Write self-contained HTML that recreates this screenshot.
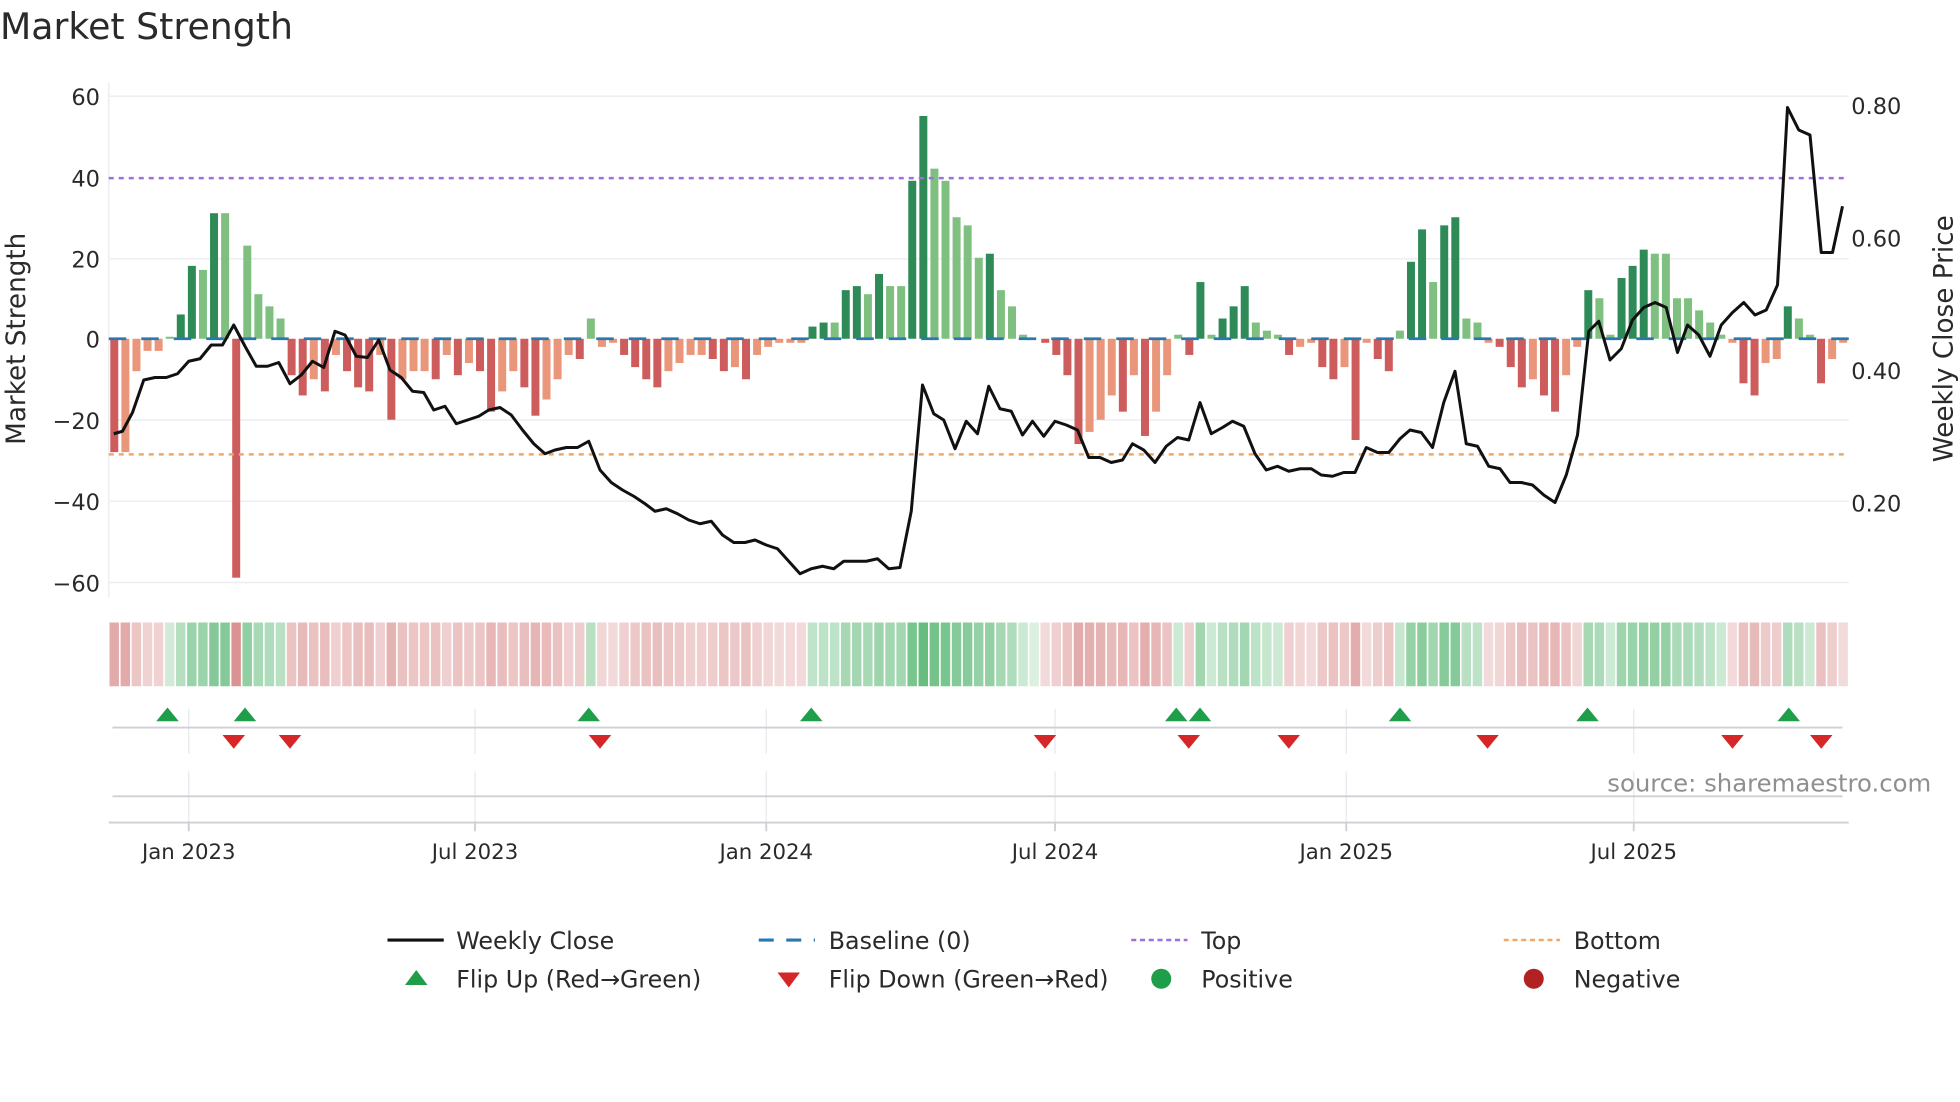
<!DOCTYPE html>
<html><head><meta charset="utf-8"><style>
html,body{margin:0;padding:0;background:#fff;width:1960px;height:1102px;overflow:hidden}
svg{display:block}
text{font-family:"DejaVu Sans","Liberation Sans",sans-serif;fill:#2a2a2a}
</style></head><body>
<svg id="s" width="1960" height="1102" viewBox="0 0 1568 881.6" xmlns="http://www.w3.org/2000/svg">
<text x="0" y="31" font-size="29">Market Strength</text>
<g stroke="#eceef3" stroke-width="1.2">
<line x1="87" x2="1479" y1="77" y2="77"/><line x1="87" x2="1479" y1="207" y2="207"/>
<line x1="87" x2="1479" y1="336" y2="336"/><line x1="87" x2="1479" y1="401" y2="401"/>
<line x1="87" x2="1479" y1="466" y2="466"/><line x1="87" x2="87" y1="66" y2="478"/>
</g>
<g font-size="18" text-anchor="end">
<text x="80" y="84">60</text><text x="80" y="149">40</text><text x="80" y="214">20</text>
<text x="80" y="278">0</text><text x="80" y="343">−20</text><text x="80" y="408">−40</text><text x="80" y="473">−60</text>
</g>
<g font-size="18">
<text x="1481" y="91">0.80</text><text x="1481" y="197">0.60</text><text x="1481" y="303">0.40</text><text x="1481" y="409">0.20</text>
</g>
<text font-size="21" transform="translate(20,271) rotate(-90)" text-anchor="middle">Market Strength</text>
<text font-size="21" transform="translate(1562,271) rotate(-90)" text-anchor="middle">Weekly Close Price</text>
<g id="bars"></g>
<line x1="87" x2="1479" y1="271" y2="271" stroke="#2a78b0" stroke-width="2.2" stroke-dasharray="14 12"/>
<line x1="87" x2="1479" y1="142.5" y2="142.5" stroke="#a06ee0" stroke-width="2" stroke-dasharray="4 4"/>
<line x1="87" x2="1479" y1="363.5" y2="363.5" stroke="#f0a868" stroke-width="2" stroke-dasharray="4 4"/>
<polyline id="price" fill="none" stroke="#111" stroke-width="2.4" stroke-linejoin="round"/>
<g id="heat"></g>
<g stroke="#e6e8ee" stroke-width="1">
<line x1="151" x2="151" y1="567" y2="603"/><line x1="380" x2="380" y1="567" y2="603"/><line x1="613" x2="613" y1="567" y2="603"/><line x1="844" x2="844" y1="567" y2="603"/><line x1="1077" x2="1077" y1="567" y2="603"/><line x1="1307" x2="1307" y1="567" y2="603"/>
<line x1="151" x2="151" y1="617" y2="658"/><line x1="380" x2="380" y1="617" y2="658"/><line x1="613" x2="613" y1="617" y2="658"/><line x1="844" x2="844" y1="617" y2="658"/><line x1="1077" x2="1077" y1="617" y2="658"/><line x1="1307" x2="1307" y1="617" y2="658"/>
</g>
<line x1="90" x2="1474" y1="582" y2="582" stroke="#cfcfd4" stroke-width="1.5"/>
<line x1="90" x2="1474" y1="637" y2="637" stroke="#cfcfd4" stroke-width="1.5"/>
<line x1="87" x2="1479" y1="658" y2="658" stroke="#cfcfd4" stroke-width="1.5"/>
<g stroke="#cfcfd4" stroke-width="1.5">
<line x1="151" x2="151" y1="658" y2="665"/><line x1="380" x2="380" y1="658" y2="665"/><line x1="613" x2="613" y1="658" y2="665"/><line x1="844" x2="844" y1="658" y2="665"/><line x1="1077" x2="1077" y1="658" y2="665"/><line x1="1307" x2="1307" y1="658" y2="665"/>
</g>
<g id="tri"></g>
<text x="1545" y="633" font-size="19.5" text-anchor="end" style="fill:#8f8f8f">source: sharemaestro.com</text>
<g font-size="17" text-anchor="middle">
<text x="151" y="687">Jan 2023</text><text x="380" y="687">Jul 2023</text><text x="613" y="687">Jan 2024</text><text x="844" y="687">Jul 2024</text><text x="1077" y="687">Jan 2025</text><text x="1307" y="687">Jul 2025</text>
</g>
<line x1="310" x2="355" y1="752" y2="752" stroke="#111" stroke-width="2.5"/>
<line x1="607" x2="652" y1="752" y2="752" stroke="#2a78b0" stroke-width="2.5" stroke-dasharray="12 10"/>
<line x1="905" x2="950" y1="752" y2="752" stroke="#a06ee0" stroke-width="2" stroke-dasharray="4 3"/>
<line x1="1203" x2="1248" y1="752" y2="752" stroke="#f0a868" stroke-width="2" stroke-dasharray="4 3"/>
<polygon points="324,788 342,788 333,776" fill="#1e9e48"/>
<polygon points="622,778 640,778 631,790" fill="#d62728"/>
<circle cx="929" cy="783" r="8" fill="#1e9e48"/>
<circle cx="1227" cy="783" r="8" fill="#b22222"/>
<g font-size="19">
<text x="365" y="759">Weekly Close</text><text x="663" y="759">Baseline (0)</text><text x="961" y="759">Top</text><text x="1259" y="759">Bottom</text>
<text x="365" y="790">Flip Up (Red→Green)</text><text x="663" y="790">Flip Down (Green→Red)</text><text x="961" y="790">Positive</text><text x="1259" y="790">Negative</text>
</g>
</svg>
<script>
var v=[-28,-28,-8,-3,-3,0.5,6,18,17,31,31,-59,23,11,8,5,-9,-14,-10,-13,-4,-8,-12,-13,-4,-20,-10,-8,-8,-10,-4,-9,-6,-8,-18,-13,-8,-12,-19,-15,-10,-4,-5,5,-2,-1,-4,-7,-10,-12,-8,-6,-4,-4,-5,-8,-7,-10,-4,-2,-1,-1,-1,3,4,4,12,13,11,16,13,13,39,55,42,39,30,28,20,21,12,8,1,0,-1,-4,-9,-26,-23,-20,-14,-18,-9,-24,-18,-9,1,-4,14,1,5,8,13,4,2,1,-4,-2,-1,-7,-10,-7,-25,-1,-5,-8,2,19,27,14,28,30,5,4,-1,-2,-7,-12,-10,-14,-18,-9,-2,12,10,1,15,18,22,21,21,10,10,7,4,1,-1,-11,-14,-6,-5,8,5,1,-11,-5,-1];
var x0=87,x1=1479,n=v.length,st=(x1-x0)/n,bw=st*0.72;
var h='',hh='';
for(var i=0;i<n;i++){var a=v[i],p=i?v[i-1]:0,up=Math.abs(a)>Math.abs(p);
var c=a>=0?(up?'#2e8b57':'#7fbf7f'):(up?'#cd5c5c':'#e9967a');
var y=271-a*3.24,x=x0+i*st+(st-bw)/2;
h+='<rect x="'+x+'" y="'+Math.min(y,271)+'" width="'+bw+'" height="'+Math.abs(271-y)+'" fill="'+c+'"/>';
var t=Math.min(Math.abs(a)/55,1),al=0.18+0.6*Math.sqrt(t);
var hc=a>=0?'rgba(60,170,90,'+al+')':'rgba(200,90,90,'+(al*0.85)+')';
hh+='<rect x="'+(x0+i*st+0.6)+'" y="498" width="'+(st-1.3)+'" height="51" fill="'+hc+'"/>';}
document.getElementById('bars').innerHTML=h;document.getElementById('heat').innerHTML=hh;
var pr="91,347 98,345 106,330 115,304 124,302 133,302 142,299 151,289 160,287 169,276 178,276 187,260 196,277 205,293 214,293 223,290 232,307 241,300 250,289 259,294 268,265 276,268 285,285 294,286 303,272 312,296 321,302 330,313 339,314 347,328 356,325 365,339 374,336 383,333 391,328 400,326 409,332 418,344 427,355 436,363 444,360 453,358 462,358 471,353 480,376 489,386 498,392 507,397 516,403 524,409 533,407 542,411 551,416 560,419 569,417 578,428 587,434 596,434 604,432 613,436 622,439 631,449 640,459 649,455 658,453 667,455 675,449 684,449 693,449 702,447 711,455 720,454 729,409 738,308 747,331 755,336 764,359 773,337 782,347 791,309 800,327 809,329 818,348 826,337 835,349 844,337 853,340 862,344 871,366 880,366 889,370 898,368 906,355 915,360 924,370 933,357 942,350 951,352 960,322 969,347 978,342 986,337 995,341 1004,363 1013,376 1022,373 1031,377 1040,375 1049,375 1057,380 1066,381 1075,378 1084,378 1093,358 1102,362 1111,362 1120,351 1128,344 1137,346 1146,358 1155,322 1164,297 1173,355 1182,357 1191,373 1200,375 1208,386 1217,386 1226,388 1235,396 1244,402 1253,380 1262,348 1271,265 1279,257 1288,288 1297,279 1306,256 1315,246 1324,242 1333,246 1342,282 1350,260 1359,268 1368,285 1377,260 1386,250 1395,242 1404,252 1413,248 1422,228 1430,86 1439,104 1448,108 1457,202 1466,202 1474,165";
document.getElementById('price').setAttribute('points',pr);
var ups=[134,196,471,649,941,960,1120,1270,1431],dn=[187,232,480,836,951,1031,1190,1386,1457],t='';
ups.forEach(function(x){t+='<polygon points="'+(x-9)+',577 '+(x+9)+',577 '+x+',566" fill="#1e9e48"/>';});
dn.forEach(function(x){t+='<polygon points="'+(x-9)+',588 '+(x+9)+',588 '+x+',599" fill="#d62728"/>';});
document.getElementById('tri').innerHTML=t;
</script>
</body></html>
